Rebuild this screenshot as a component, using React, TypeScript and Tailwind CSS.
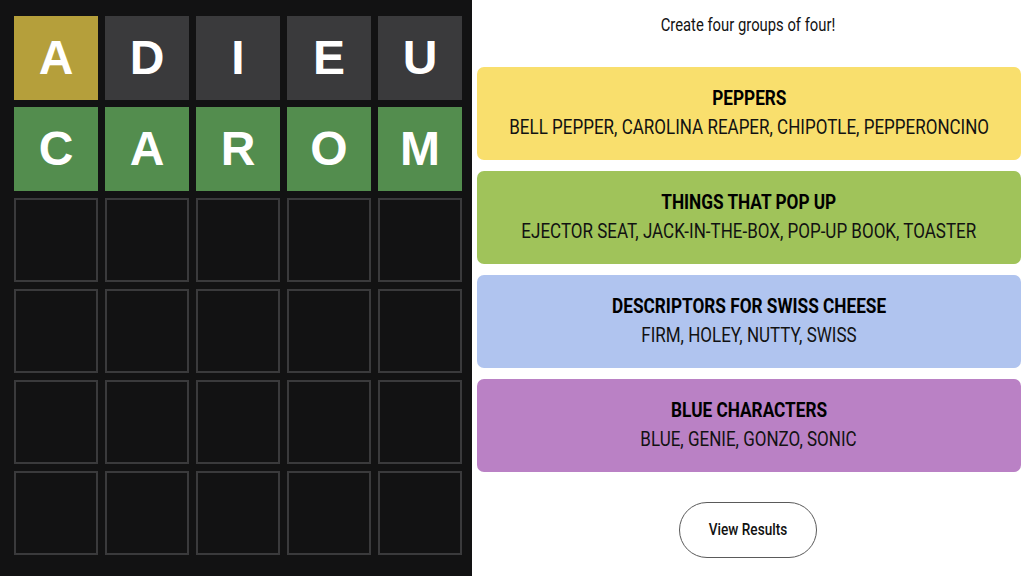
import React from 'react';

type Tile = { letter: string; state: 'present' | 'absent' | 'correct' | 'empty' };

const rows: Tile[][] = [
  [
    { letter: 'A', state: 'present' },
    { letter: 'D', state: 'absent' },
    { letter: 'I', state: 'absent' },
    { letter: 'E', state: 'absent' },
    { letter: 'U', state: 'absent' },
  ],
  'CAROM'.split('').map((letter) => ({ letter, state: 'correct' as const })),
  ...Array.from({ length: 4 }, () =>
    Array.from({ length: 5 }, () => ({ letter: '', state: 'empty' as const }))
  ),
];

const tileClass: Record<Tile['state'], string> = {
  present: 'bg-[#b59f3b]',
  absent: 'bg-[#3a3a3c]',
  correct: 'bg-[#538d4e]',
  empty: 'border-2 border-[#3a3a3c]',
};

const groups = [
  {
    title: 'PEPPERS',
    items: 'BELL PEPPER, CAROLINA REAPER, CHIPOTLE, PEPPERONCINO',
    color: 'bg-[#f9df6d]',
  },
  {
    title: 'THINGS THAT POP UP',
    items: 'EJECTOR SEAT, JACK-IN-THE-BOX, POP-UP BOOK, TOASTER',
    color: 'bg-[#a0c35a]',
  },
  {
    title: 'DESCRIPTORS FOR SWISS CHEESE',
    items: 'FIRM, HOLEY, NUTTY, SWISS',
    color: 'bg-[#b0c4ef]',
  },
  {
    title: 'BLUE CHARACTERS',
    items: 'BLUE, GENIE, GONZO, SONIC',
    color: 'bg-[#ba81c5]',
  },
];

export default function App() {
  return (
    <div className="flex w-[1024px] h-[576px] overflow-hidden">
      {/* Wordle board */}
      <div className="w-[472px] shrink-0 h-full bg-[#121213] pl-[14px] pt-[16px]">
        <div className="grid grid-cols-[repeat(5,84px)] auto-rows-[84px] gap-[7px]">
          {rows.flat().map((tile, i) => (
            <div
              key={i}
              className={`flex items-center justify-center text-white font-bold text-[48px] font-['Liberation_Sans',Arial,sans-serif] ${tileClass[tile.state]}`}
            >
              {tile.letter}
            </div>
          ))}
        </div>
      </div>

      {/* Connections results */}
      <div className="flex-1 min-w-0 h-full bg-white flex flex-col items-center font-['Roboto',sans-serif]">
        <p className="mt-[13px] text-[19px] text-[#121212] leading-6 whitespace-nowrap scale-x-[0.78]">
          Create four groups of four!
        </p>
        <div className="mt-[30px] w-full pl-[5px] pr-[3px] flex flex-col gap-[11px]">
          {groups.map((g) => (
            <div
              key={g.title}
              className={`h-[93px] min-w-0 rounded-[7px] flex flex-col items-center justify-center pb-[2px] text-black ${g.color}`}
            >
              <div className="text-[21px] font-bold leading-[29px] whitespace-nowrap scale-x-[0.82]">{g.title}</div>
              <div className="text-[21px] leading-[29px] text-[#121212] whitespace-nowrap scale-x-[0.81]">{g.items}</div>
            </div>
          ))}
        </div>
        <button className="mt-[30px] w-[138px] h-[56px] rounded-full border border-[#5a5a5a] text-[#121212]">
          <span className="inline-block text-[17px] font-medium whitespace-nowrap scale-x-[0.8]">View Results</span>
        </button>
      </div>
    </div>
  );
}
